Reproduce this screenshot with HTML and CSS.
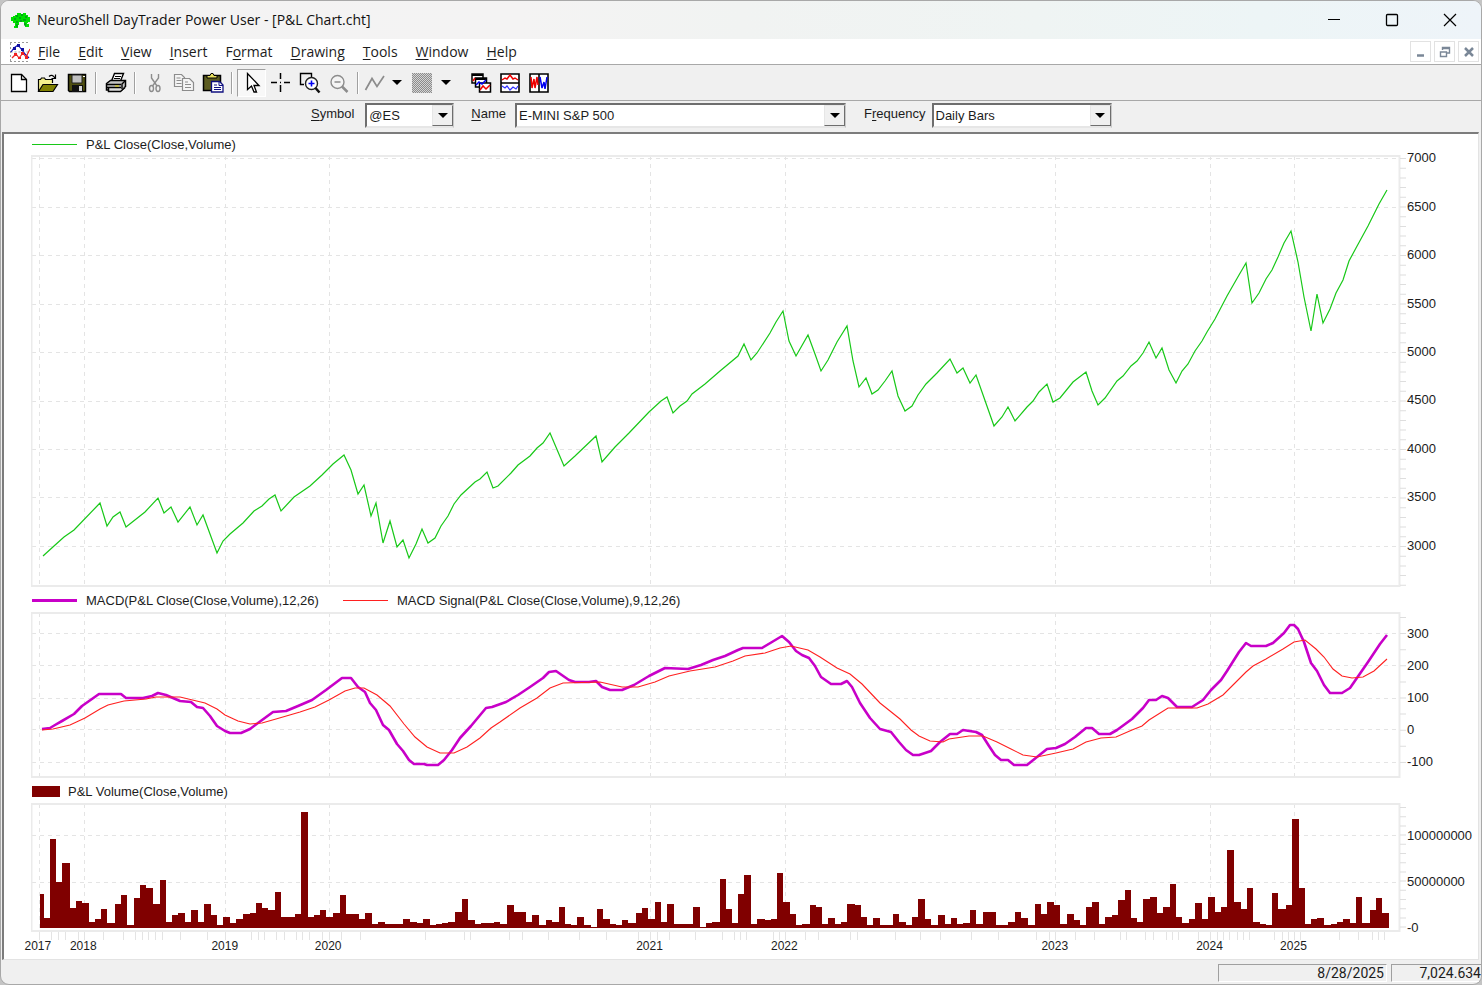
FILE: index.html
```html
<!DOCTYPE html>
<html lang="en">
<head>
<meta charset="utf-8">
<title>NeuroShell DayTrader Power User - [P&amp;L Chart.cht]</title>
<link rel="stylesheet" href="styles.css">
</head>
<body>
<div class="window">
  <header class="titlebar">
    <svg class="app-icon" width="20" height="16" viewBox="0 0 20 16"><path d="M4 3h2V1h4v1h2V1h3v2h2v2h2v5h-2v1h-1v1h2v3h-4v-2h-1v-3H8v3H7v3H3v-2h1v-3H2V9H0V5h2V4h2z" fill="#00e000"/><path d="M5 4h2M10 3h2M14 5h2M3 7h2M8 6h2M12 8h3M5 10h2M9 9h2M6 12v3M14 11v3" stroke="#00702a" fill="none"/></svg>
    <h1 class="title">NeuroShell DayTrader Power User - [P&amp;L Chart.cht]</h1>
    <div class="caption-buttons">
      <button class="caption" aria-label="Minimize"><svg width="14" height="14" viewBox="0 0 14 14"><path d="M1 6.500h12" stroke="#000"/></svg></button>
      <button class="caption" aria-label="Maximize"><svg width="14" height="14" viewBox="0 0 14 14"><rect x="1.500" y="1.500" width="11" height="11" rx="1" fill="none" stroke="#000" stroke-width="1.300"/></svg></button>
      <button class="caption" aria-label="Close"><svg width="14" height="14" viewBox="0 0 14 14"><path d="M1 1l12 12M13 1L1 13" stroke="#000" stroke-width="1.200"/></svg></button>
    </div>
  </header>

  <nav class="menubar">
    <svg class="doc-icon" width="20" height="20" viewBox="0 0 20 20"><path d="M.5 1v19M0 .5h20M0 19.500h20M.5 10h19" stroke="#999" stroke-dasharray="2 2" fill="none"/><path d="M1 10l3-4 4-3 4 5 3 4 4 4" stroke="#1010c0" stroke-width="1.200" fill="none"/><path d="M2 16l4-4 3 4 4-5 3 4 4-8" stroke="#f02020" stroke-width="1.200" fill="none"/><path d="M7 2h3v3H7zM11 6h3v3h-3zM3 5h3v3H3z" fill="#1010a0"/><path d="M4 11h3v3H4zM8 15h3v2H8zM11 10h3v3h-3zM15 14h3v3h-3z" fill="#f02020"/></svg>
    <div class="menus">
      <button class="menu"><u>F</u>ile</button>
      <button class="menu"><u>E</u>dit</button>
      <button class="menu"><u>V</u>iew</button>
      <button class="menu"><u>I</u>nsert</button>
      <button class="menu">F<u>o</u>rmat</button>
      <button class="menu"><u>D</u>rawing</button>
      <button class="menu"><u>T</u>ools</button>
      <button class="menu"><u>W</u>indow</button>
      <button class="menu"><u>H</u>elp</button>
    </div>
    <div class="mdi-buttons">
      <button class="mdi" aria-label="Minimize chart"><svg width="12" height="12" viewBox="0 0 12 12"><path d="M2 9.500h7" stroke="#7a8797" stroke-width="2.500"/></svg></button>
      <button class="mdi" aria-label="Restore chart"><svg width="12" height="12" viewBox="0 0 12 12"><path d="M3.500 4V1.500h7V7H8M3 2.500h7M1.500 6h6v4.500h-6zM1 6h7" stroke="#7a8797" stroke-width="1.400" fill="none"/></svg></button>
      <button class="mdi" aria-label="Close chart"><svg width="12" height="12" viewBox="0 0 12 12"><path d="M2 2l8 8M10 2l-8 8" stroke="#7a8797" stroke-width="2.500"/></svg></button>
    </div>
  </nav>

  <div class="toolbar">
    <button class="tool" aria-label="New"><svg width="22" height="22" viewBox="0 0 22 22"><path d="M3.500 2.500h10l5 5v12h-15z" fill="#fff" stroke="#000" stroke-width="1.300"/><path d="M13.500 2.500v5h5" fill="none" stroke="#000" stroke-width="1.300"/></svg></button>
    <button class="tool" aria-label="Open"><svg width="22" height="22" viewBox="0 0 22 22"><path d="M1.500 19V7.500h2l1-1.500h3l1 1.500h7V11" fill="#f4f08a" stroke="#000" stroke-width="1.200"/><path d="M1.500 19.500l4.500-7h14.500l-4.500 7z" fill="#808000" stroke="#000" stroke-width="1.200"/><path d="M12 4.500q3-3 6 1.500M18.500 2.500v4h-4" fill="none" stroke="#000" stroke-width="1.200"/></svg></button>
    <button class="tool" aria-label="Save"><svg width="22" height="22" viewBox="0 0 22 22"><path d="M2.500 2.500h17v17h-16l-1-1z" fill="#505010" stroke="#000" stroke-width="1.500"/><path d="M6 3h10v8H6z" fill="#c0c0c0" stroke="#222"/><path d="M6 13h11v7H6z" fill="#111"/><path d="M13 14h3v5h-3z" fill="#d8d8d8"/><path d="M17 4h2v1h-2z" fill="#fff"/></svg></button>
    <span class="sep"></span>
    <button class="tool" aria-label="Print"><svg width="22" height="22" viewBox="0 0 22 22"><path d="M6.500 9l3-7.500h9l-3 7.500" fill="#fff" stroke="#000" stroke-width="1.400"/><path d="M10 4.500h6M9 6.500h6" stroke="#000"/><path d="M1.500 11.500l4-3h15v6l-4 3.500h-15z" fill="#c4c4c4" stroke="#000" stroke-width="1.500"/><path d="M3.500 15.500v4h12l4.500-4" fill="#ddd" stroke="#000" stroke-width="1.500"/><path d="M2 12.500h14M2 15.500h14M17 17V12l3-3" stroke="#000" stroke-width="1.400" fill="none"/><path d="M10 14h4" stroke="#e0d000"/></svg></button>
    <span class="sep"></span>
    <button class="tool" aria-label="Cut" disabled><svg width="22" height="22" viewBox="0 0 22 22"><g fill="none" stroke="#8c8c8c" stroke-width="1.400"><path d="M7.500 2v4l5.500 8M14.500 2v4L8.500 14"/><ellipse cx="7.500" cy="16.500" rx="2" ry="3"/><ellipse cx="14" cy="16.500" rx="2" ry="3"/></g></svg></button>
    <button class="tool" aria-label="Copy" disabled><svg width="22" height="22" viewBox="0 0 22 22"><g fill="#f4f4f4" stroke="#8c8c8c" stroke-width="1.200"><path d="M1.500 2.500h7l3 3v9h-10z"/><path d="M9.500 6.500h7l4 4v8h-11z"/><path d="M3.500 6h4M3.500 8.500h5M3.500 11.500h5M12 10h3M12 12.500h6M12 15.500h6"/></g></svg></button>
    <button class="tool" aria-label="Paste"><svg width="22" height="22" viewBox="0 0 22 22"><path d="M1.500 3.500h17v15h-17z" fill="#5c5c20" stroke="#000" stroke-width="1.500"/><path d="M5 6V3.500h3L9 1.500h2l1 2h3V6z" fill="#e8e060" stroke="#000"/><path d="M9.500 9.500h8l3.500 3.500v7H9.500z" fill="#fff" stroke="#101080" stroke-width="1.300"/><path d="M17 9.500v4h4M12 13h3M12 15.500h7M12 17.500h7" fill="none" stroke="#101080"/></svg></button>
    <span class="sep"></span>
    <button class="tool pressed" aria-label="Pointer"><svg width="22" height="22" viewBox="0 0 22 22"><path d="M6.500 1.500v16l4-3.500 2.500 6h2.500l-2.500-6.500h5z" fill="#fff" stroke="#000" stroke-width="1.300"/></svg></button>
    <button class="tool" aria-label="Crosshair"><svg width="22" height="22" viewBox="0 0 22 22"><path d="M1 10.500h6M14 10.500h6M10.500 1v6M10.500 13v7M10 10.500h1" stroke="#000" stroke-width="1.500"/></svg></button>
    <button class="tool" aria-label="Zoom in"><svg width="22" height="22" viewBox="0 0 22 22"><path d="M5 12.500H1.500v-11h11V5" fill="none" stroke="#000" stroke-width="1.400"/><circle cx="12.500" cy="11.500" r="6" fill="#fff" stroke="#222" stroke-width="1.400"/><path d="M16.500 16l4 4.500" stroke="#111" stroke-width="2.500"/><path d="M9.500 11.500h6M12.500 8.500v6" stroke="#0000f0" stroke-width="1.600"/></svg></button>
    <button class="tool" aria-label="Zoom out" disabled><svg width="22" height="22" viewBox="0 0 22 22"><circle cx="9.500" cy="10" r="6.500" fill="#f4f4f4" stroke="#8c8c8c" stroke-width="1.400"/><path d="M14 14.500l5.500 5.500" stroke="#8c8c8c" stroke-width="2.500"/><path d="M6.500 10h6" stroke="#8c8c8c" stroke-width="1.500"/></svg></button>
    <span class="sep"></span>
    <button class="tool narrow" aria-label="Line style" disabled><svg width="22" height="22" viewBox="0 0 22 22"><path d="M1.500 18L8 6.500l5 8L20 4" fill="none" stroke="#8c8c8c" stroke-width="1.700"/></svg></button>
    <button class="drop" aria-label="Line style list"><span class="tri"></span></button>
    <button class="tool" aria-label="Fill" disabled><svg width="22" height="22" viewBox="0 0 22 22"><defs><pattern id="hatch" width="2" height="2" patternUnits="userSpaceOnUse"><path d="M0 0h1v1H0zM1 1h1v1H1z" fill="#8c8c8c"/></pattern></defs><path d="M1 1h20v20H1z" fill="#d4d4d4"/><path d="M1 1h20v20H1z" fill="url(#hatch)"/></svg></button>
    <button class="drop" aria-label="Fill list"><span class="tri"></span></button>
    <span class="space"></span>
    <button class="tool" aria-label="Cascade charts"><svg width="22" height="22" viewBox="0 0 22 22"><g fill="#fff" stroke="#000" stroke-width="1.500"><path d="M2 2h11v9H2z"/><path d="M5.500 6h11v9h-11z"/><path d="M9.500 11h11v9h-11z"/></g><path d="M2 3h11M6 7h11" stroke="#000" stroke-width="2"/><path d="M3 9l2-3M10 18l3-4 3 3 4-4" stroke="#f00000" stroke-width="1.500" fill="none"/><path d="M6 13l3-3 3 2 4-4" stroke="#0000f0" stroke-width="1.500" fill="none"/></svg></button>
    <button class="tool" aria-label="Stack charts"><svg width="22" height="22" viewBox="0 0 22 22"><path d="M2 2h18v18H2zM2 11h18" fill="#fff" stroke="#000" stroke-width="1.600"/><path d="M3 8l3-2 2 1 3-4 3 4 2-1 3 2" fill="none" stroke="#f00000" stroke-width="1.500"/><path d="M3 14l3 2 2-2 3 4 3-3 3 2 2-3" fill="none" stroke="#3030ff" stroke-width="1.200"/></svg></button>
    <button class="tool" aria-label="Tile charts"><svg width="22" height="22" viewBox="0 0 22 22"><path d="M2 2h18v18H2zM11 2v18" fill="#fff" stroke="#000" stroke-width="1.600"/><path d="M3 5l1 11 2-9 1 9 2-11 1 8" fill="none" stroke="#f00000" stroke-width="1.500"/><path d="M12 5l2 11 2-6 1 7 2-12" fill="none" stroke="#0000f0" stroke-width="1.500"/></svg></button>
  </div>

  <form class="fieldbar">
    <div class="field field-symbol">
      <label for="symbol"><u>S</u>ymbol</label>
      <span class="combo"><select id="symbol"><option>@ES</option></select><span class="combo-arrow"><span class="tri"></span></span></span>
    </div>
    <div class="field field-name">
      <label for="name"><u>N</u>ame</label>
      <span class="combo"><select id="name"><option>E-MINI S&amp;P 500</option></select><span class="combo-arrow"><span class="tri"></span></span></span>
    </div>
    <div class="field field-frequency">
      <label for="frequency">F<u>r</u>equency</label>
      <span class="combo"><select id="frequency"><option>Daily Bars</option></select><span class="combo-arrow"><span class="tri"></span></span></span>
    </div>
  </form>

  <main class="charts">
    <div class="legend legend-first"><span class="key key-price"></span><span class="key-text">P&amp;L Close(Close,Volume)</span></div>
    <section class="panel panel-price">
      <svg class="plot" viewBox="31 155 1376 432" preserveAspectRatio="none">
        <path class="grid" d="M32 158.500H1400M32 207.500H1400M32 255.500H1400M32 304.500H1400M32 352.500H1400M32 401.500H1400M32 449.500H1400M32 497.500H1400M32 546.500H1400"/>
        <path class="grid" d="M39.500 156V586M84.500 156V586M225.500 156V586M329.500 156V586M650.500 156V586M785.500 156V586M1055.500 156V586M1210.500 156V586M1294.500 156V586"/>
        <path class="frame" d="M31.500 156H1399.500V586H31.500z"/>
        <path class="ticks ticks-price" d="M1403 158V586"/>
        <polyline class="price" points="43,556 54,546 64,537 74,530 100,503 107,526 113,517 120,512 126,527 145,512 158,498 164,513 171,507 178,522 190,507 197,525 203,515 217,553 223,541 230,534 243,523 254,511 262,506 269,499 275,495 281,511 294,497 310,486 322,475 333,464 344,455 351,470 358,494 364,485 371,516 376,503 383,543 390,521 397,547 403,540 409,558 416,544 422,529 428,543 435,538 441,526 448,516 454,504 461,495 475,482 480,479 487,472 493,488 498,486 511,473 518,465 530,456 537,448 543,443 550,433 564,466 575,456 596,436 602,462 615,447 629,433 649,412 661,401 667,397 673,413 680,406 687,401 692,394 705,384 720,371 738,356 744,344 751,360 757,353 770,333 776,322 783,311 789,341 796,356 808,335 815,354 821,371 828,360 837,342 847,326 853,361 859,387 866,378 872,394 878,390 885,381 892,371 898,396 905,411 912,406 918,395 926,384 937,373 950,359 957,373 963,368 970,383 976,375 982,392 994,426 1002,417 1008,407 1015,421 1027,407 1033,401 1039,392 1047,384 1053,402 1060,398 1073,382 1086,372 1092,391 1098,405 1105,398 1117,381 1123,376 1131,366 1137,361 1143,353 1149,342 1156,358 1162,348 1169,370 1176,383 1182,371 1188,364 1195,351 1202,341 1207,332 1215,319 1227,296 1239,275 1246,263 1252,303 1259,293 1266,279 1272,270 1278,257 1284,243 1291,231 1298,262 1304,297 1311,331 1317,294 1323,323 1330,309 1336,293 1343,280 1349,261 1356,248 1368,226 1373,216 1379,204 1387,190"/>
      </svg>
      <div class="y-axis">
        <span style="top:0.700%">7000</span><span style="top:12%">6500</span><span style="top:23.200%">6000</span><span style="top:34.500%">5500</span><span style="top:45.600%">5000</span><span style="top:56.800%">4500</span><span style="top:68.100%">4000</span><span style="top:79.200%">3500</span><span style="top:90.500%">3000</span>
      </div>
    </section>

    <div class="legend"><span class="key key-macd"></span><span class="key-text">MACD(P&amp;L Close(Close,Volume),12,26)</span><span class="key key-signal"></span><span class="key-text">MACD Signal(P&amp;L Close(Close,Volume),9,12,26)</span></div>
    <section class="panel panel-macd">
      <svg class="plot" viewBox="31 612 1376 166" preserveAspectRatio="none">
        <path class="grid" d="M32 633.500H1400M32 665.500H1400M32 698.500H1400M32 729.500H1400M32 762.500H1400"/>
        <path class="grid" d="M39.500 613V777M84.500 613V777M225.500 613V777M329.500 613V777M650.500 613V777M785.500 613V777M1055.500 613V777M1210.500 613V777M1294.500 613V777"/>
        <path class="frame" d="M31.500 613H1399.500V777H31.500z"/>
        <path class="ticks ticks-macd" d="M1403 617V776"/>
        <polyline class="macd" points="42,729 50,728 55,725 62,721 74,714 82,706 99,694 121,694 126,698 143,698 152,696 158,693 166,695 180,701 191,702 197,707 203,708 210,716 217,726 225,731 230,733 241,733 250,729 258,723 273,712 286,711 298,706 312,700 326,690 342,678 351,678 358,687 365,692 370,703 376,710 383,725 389,730 397,744 403,751 409,760 414,764 424,764 427,765 438,765 444,760 452,750 460,738 471,726 486,708 492,707 506,702 518,695 530,687 543,678 549,672 556,671 569,680 575,682 589,682 596,681 602,687 610,690 622,690 634,685 649,676 665,668 688,669 701,665 713,660 725,656 738,650 743,648 762,648 772,642 782,636 789,642 796,651 802,655 809,658 815,666 821,677 831,684 841,684 847,681 852,687 860,703 870,718 880,729 891,732 899,742 906,750 913,755 919,755 931,751 940,742 950,734 957,734 963,730 976,732 982,735 989,746 995,755 1001,760 1008,760 1014,765 1027,765 1037,757 1047,749 1056,748 1065,744 1075,737 1086,728 1092,728 1099,734 1110,734 1117,730 1132,719 1143,708 1149,700 1156,700 1162,696 1168,698 1177,707 1192,707 1203,700 1211,690 1221,680 1227,671 1239,652 1246,643 1251,646 1266,646 1273,643 1284,633 1290,625 1294,625 1298,629 1304,642 1311,663 1317,671 1324,685 1330,693 1342,693 1350,688 1359,675 1368,662 1380,644 1387,635"/>
        <polyline class="signal" points="42,730 53,729 70,725 85,718 100,709 108,705 124,701 146,699 156,697 180,697 205,703 217,709 225,715 238,721 250,724 262,723 276,719 300,712 315,707 329,700 345,691 355,688 364,688 377,695 390,706 404,724 415,737 427,747 440,753 454,753 467,747 480,738 491,728 500,722 520,708 537,698 550,688 563,683 600,682 622,687 638,687 655,682 669,676 690,671 715,667 733,661 745,656 765,653 780,648 791,646 808,650 820,657 837,668 850,674 862,684 880,703 900,719 911,730 919,736 930,741 943,742 949,739 969,736 983,736 997,742 1011,749 1023,755 1037,757 1056,753 1073,749 1086,742 1101,738 1116,737 1132,730 1142,726 1149,720 1168,708 1197,708 1208,704 1223,695 1234,684 1246,672 1253,666 1266,659 1283,649 1294,642 1305,640 1316,649 1324,657 1333,669 1342,676 1352,678 1363,677 1374,671 1387,659"/>
      </svg>
      <div class="y-axis">
        <span style="top:13%">300</span><span style="top:32.500%">200</span><span style="top:52%">100</span><span style="top:71%">0</span><span style="top:90.500%">-100</span>
      </div>
    </section>

    <div class="legend"><span class="key key-volume"></span><span class="key-text">P&amp;L Volume(Close,Volume)</span></div>
    <section class="panel panel-volume">
      <svg class="plot" viewBox="31 803 1376 137" preserveAspectRatio="none">
        <path class="grid" d="M32 835.500H1400M32 882.500H1400"/>
        <path class="grid" d="M39.500 804V931M84.500 804V931M225.500 804V931M329.500 804V931M650.500 804V931M785.500 804V931M1055.500 804V931M1210.500 804V931M1294.500 804V931"/>
        <path class="frame" d="M31.500 804H1399.500V931H31.500z"/>
        <path class="ticks ticks-volume" d="M1403 807V931"/>
        <path class="date-ticks" d="M39.500 932v8M51.500 932v8M58.500 932v8M65.500 932v8M78.500 932v8M84.500 932v8M103.500 932v8M123.500 932v8M135.500 932v8M142.500 932v8M148.500 932v8M155.500 932v8M162.500 932v8M180.500 932v8M207.500 932v8M225.500 932v8M251.500 932v8M258.500 932v8M264.500 932v8M276.500 932v8M284.500 932v8M296.500 932v8M302.500 932v8M309.500 932v8M322.500 932v8M329.500 932v8M341.500 932v8M360.500 932v8M425.500 932v8M464.500 932v8M470.500 932v8M509.500 932v8M522.500 932v8M548.500 932v8M579.500 932v8M606.500 932v8M638.500 932v8M650.500 932v8M657.500 932v8M669.500 932v8M695.500 932v8M722.500 932v8M734.500 932v8M740.500 932v8M746.500 932v8M773.500 932v8M779.500 932v8M785.500 932v8M805.500 932v8M818.500 932v8M850.500 932v8M857.500 932v8M895.500 932v8M920.500 932v8M940.500 932v8M971.500 932v8M998.500 932v8M1036.500 932v8M1049.500 932v8M1055.500 932v8M1075.500 932v8M1094.500 932v8M1120.500 932v8M1126.500 932v8M1145.500 932v8M1153.500 932v8M1166.500 932v8M1172.500 932v8M1178.500 932v8M1198.500 932v8M1210.500 932v8M1217.500 932v8M1223.500 932v8M1229.500 932v8M1237.500 932v8M1243.500 932v8M1249.500 932v8M1274.500 932v8M1282.500 932v8M1288.500 932v8M1294.500 932v8M1300.500 932v8M1339.500 932v8M1358.500 932v8M1372.500 932v8M1378.500 932v8M1384.500 932v8"/>
        <path class="volume" d="M40 928V894H44V918H50V839H56V882H62V863H70V908H76V901H82V903H89V922H95V919H101V909H107V923H115V904H121V895H127V925H134V898H140V885H146V888H153V904H160V880H166V922H172V915H178V913H185V922H191V910H198V922H204V904H211V915H217V925H223V917H230V923H236V919H243V914H250V913H256V903H262V908H268V910H275V892H281V917H295V914H301V812H308V917H314V915H320V910H326V917H333V913H340V895H346V914H359V919H365V913H372V924H378V922H385V924H403V919H410V922H417V923H423V919H430V925H436V924H442V923H448V922H455V912H462V899H468V920H475V924H481V923H494V922H500V924H507V905H514V912H526V922H532V915H539V925H546V920H552V922H559V907H565V924H571V925H577V917H584V925H591V927H597V909H603V919H610V924H616V925H622V920H628V923H636V913H642V908H648V919H655V902H661V922H667V904H674V924H693V907H700V927H706V923H712V922H720V879H726V909H732V923H738V894H744V875H751V924H757V919H765V920H771V919H777V873H783V902H790V914H796V925H802V924H810V905H816V907H822V924H828V918H835V924H841V922H847V904H855V905H861V917H867V925H873V918H880V925H893V914H899V922H906V925H912V917H918V899H925V919H931V925H938V915H945V924H951V918H957V924H963V923H970V910H976V924H983V912H996V925H1008V922H1015V912H1021V918H1028V925H1035V904H1041V914H1047V902H1054V905H1060V924H1067V914H1074V920H1080V925H1086V907H1092V902H1099V924H1105V917H1112V915H1118V900H1125V890H1131V918H1137V922H1143V899H1150V897H1157V913H1163V907H1170V884H1176V917H1182V923H1189V919H1195V903H1202V919H1208V897H1215V912H1221V907H1227V850H1234V902H1241V909H1247V888H1253V922H1260V924H1266V925H1272V893H1278V909H1286V905H1292V819H1299V888H1305V924H1311V919H1317V918H1324V925H1331V924H1337V922H1343V919H1350V923H1356V897H1362V923H1370V910H1376V898H1382V913H1389V928z"/>
      </svg>
      <div class="y-axis">
        <span style="top:24%">100000000</span><span style="top:57.500%">50000000</span><span style="top:91%">-0</span>
      </div>
    </section>
    <div class="x-axis">
      <div class="x-labels">
        <span style="left:0.500%">2017</span><span style="left:3.800%">2018</span><span style="left:14.080%">2019</span><span style="left:21.600%">2020</span><span style="left:44.950%">2021</span><span style="left:54.750%">2022</span><span style="left:74.400%">2023</span><span style="left:85.650%">2024</span><span style="left:91.750%">2025</span>
      </div>
    </div>
  </main>

  <footer class="statusbar">
    <span class="cell cell-date">8/28/2025</span>
    <span class="cell cell-value">7,024.634</span>
  </footer>
</div>
</body>
</html>
```

FILE: styles.css
```css
* { box-sizing: border-box; }

html, body { height: 100%; }

body {
  margin: 0;
  background: #c4c4c4;
  color: #1c1c1c;
  font-family: "Liberation Sans", Arial, sans-serif;
  font-size: 13px;
}

button {
  margin: 0;
  padding: 0;
  border: 0;
  background: none;
  color: inherit;
  font: inherit;
}

svg { display: block; flex: none; }

.window {
  display: flex;
  flex-direction: column;
  height: 100vh;
  border: 1px solid #a8a8a8;
  border-radius: 9px;
  background: #f0f0f0;
  overflow: hidden;
}

/* Title bar */
.titlebar {
  display: flex;
  flex: none;
  align-items: center;
  height: 38px;
  padding: 0 2px 0 10px;
  background: linear-gradient(90deg, #f3f3f3 0%, #f4f3f3 35%, #f1f3f2 50%, #eff4f3 70%, #edf5f6 85%, #eef4f9 100%);
}

.title {
  margin: 0 0 0 6px;
  color: #111;
  font: 400 14px/20px "Open Sans", "Noto Sans", sans-serif;
}

.caption-buttons { display: flex; margin-left: auto; }

.caption {
  display: flex;
  align-items: center;
  justify-content: center;
  width: 58px;
  height: 38px;
}

/* Menu bar */
.menubar {
  display: flex;
  flex: none;
  align-items: center;
  height: 25px;
  padding: 0 2px 0 9px;
  background: #fff;
}

.menus { display: flex; gap: 18px; margin-left: 8px; }

.menu { font: 14px/20px "Open Sans", "Noto Sans", sans-serif; }

u { text-decoration: underline; text-underline-offset: 2px; }

.mdi-buttons { display: flex; gap: 3px; margin-left: auto; }

.mdi {
  display: flex;
  align-items: center;
  justify-content: center;
  width: 21px;
  height: 21px;
  border: 1px solid #e2e2e2;
}

/* Toolbar */
.toolbar {
  display: flex;
  flex: none;
  align-items: center;
  height: 36px;
  padding-left: 3px;
  border-top: 1px solid #a8a8a8;
}

.tool {
  display: flex;
  align-items: center;
  justify-content: center;
  width: 29px;
  height: 28px;
}

.narrow { width: 24px; }

.pressed {
  border: 1px solid;
  border-color: #a0a0a0 #fff #fff #a0a0a0;
  background: #f8f8f8;
}

.drop {
  display: flex;
  align-items: center;
  justify-content: center;
  width: 20px;
  height: 28px;
}

.tri {
  border: 5px solid transparent;
  border-top-color: #000;
  border-bottom-width: 0;
}

.sep {
  width: 2px;
  height: 22px;
  margin: 0 4px;
  border-left: 1px solid #a0a0a0;
  border-right: 1px solid #fff;
}

.space { width: 10px; }

/* Symbol / name / frequency row */
.fieldbar {
  display: flex;
  flex: none;
  align-items: flex-start;
  height: 32px;
  margin: 0;
  padding: 2px 0 0 310px;
  border-top: 1px solid #a8a8a8;
}

.field { display: flex; }

.field label { line-height: 22px; }

.field-symbol .combo { width: 89px; margin-left: 11px; }
.field-name { margin-left: 17px; }
.field-name .combo { width: 331px; margin-left: 9px; }
.field-frequency { margin-left: 18px; }
.field-frequency .combo { width: 180px; margin-left: 6px; }

.combo { display: grid; height: 25px; }

.combo select {
  grid-area: 1 / 1;
  width: 100%;
  padding: 0 0 0 2px;
  border: 2px solid;
  border-color: #6e6e6e #c8c8c8 #e6e6e6 #6e6e6e;
  border-radius: 0;
  background: #fff;
  color: #1c1c1c;
  font: inherit;
  appearance: none;
}

.combo-arrow {
  display: flex;
  grid-area: 1 / 1;
  align-items: center;
  justify-content: center;
  justify-self: end;
  width: 21px;
  margin: 2px 1px 2px 0;
  border: 1px solid;
  border-color: #e6e6e6 #6e6e6e #6e6e6e #e6e6e6;
  background: #f0f0f0;
  pointer-events: none;
}

/* Charts */
.charts {
  display: flex;
  flex: 1;
  flex-direction: column;
  min-height: 0;
  margin: 0 2px 0 1px;
  padding-left: 27px;
  border: solid;
  border-width: 2px 1px 1px 2px;
  border-color: #7c7c7c #e3e3e3 #e3e3e3 #7c7c7c;
  background: #fff;
}

.legend {
  display: flex;
  flex: none;
  align-items: center;
  height: 25px;
  padding: 1px 0 0 1px;
  white-space: nowrap;
}

.legend-first { height: 21px; padding-top: 0; }

.key { flex: none; width: 45px; height: 1px; }
.key-price { background: #18c818; }
.key-macd { height: 3px; background: #c800c8; }
.key-signal { margin-left: 24px; background: #ff2020; }
.key-volume { width: 28px; height: 11px; background: #800000; }
.key-text { margin-left: 9px; }
.key-volume + .key-text { margin-left: 8px; }

.panel { display: flex; min-height: 0; }
.panel-price { flex: 432 0 0; }
.panel-macd { flex: 166 0 0; }
.panel-volume { flex: 137 0 0; }

.plot { flex: 1; min-width: 0; height: 100%; }

.plot path, .plot polyline { fill: none; }
.plot .grid { stroke: #e4e4e4; stroke-dasharray: 4 4; }
.plot .frame { stroke: #ebebeb; stroke-width: 2; }
.plot .ticks { stroke: #dedede; stroke-width: 6; }
.plot .ticks-price { stroke-dasharray: 1 8.7; }
.plot .ticks-macd { stroke-dasharray: 1 15.1; }
.plot .ticks-volume { stroke-dasharray: 1 8.2; }
.plot .date-ticks { stroke: #e4e4e4; }
.plot .price { stroke: #18c818; stroke-width: 1.2; }
.plot .macd { stroke: #c800c8; stroke-width: 2.6; stroke-linejoin: round; }
.plot .signal { stroke: #ff2020; stroke-width: 1.1; }
.plot .volume { fill: #800000; }

.y-axis { position: relative; flex: none; width: 71px; }

.y-axis span {
  position: absolute;
  left: 0;
  line-height: 16px;
  transform: translateY(-50%);
}

.x-axis { flex: none; height: 19px; padding-right: 71px; }

.x-labels { position: relative; font-size: 12px; }

.x-labels span {
  position: absolute;
  line-height: 13px;
  transform: translateX(-50%);
}

/* Status bar */
.statusbar {
  display: flex;
  flex: none;
  justify-content: flex-end;
  gap: 4px;
  height: 24px;
  padding: 4px 0 2px;
  font: 14px/16px Roboto, sans-serif;
}

.cell {
  border: 1px solid;
  border-color: #a0a0a0 #fff #fff #a0a0a0;
  text-align: right;
}

.cell-date { width: 169px; padding-right: 2px; }
.cell-value { width: 90px; border-right: 0; }
```
